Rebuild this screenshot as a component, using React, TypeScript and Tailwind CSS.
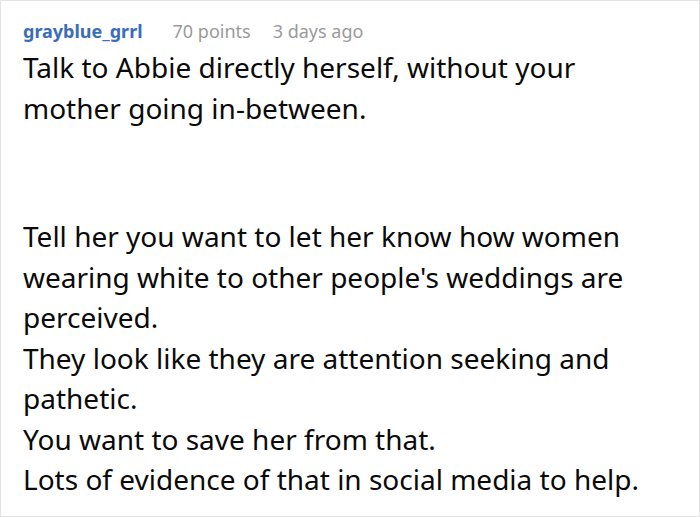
import React from "react";

export default function App() {
  return (
    <div
      className="w-[700px] h-[517px] bg-white border border-[#e3e3e3] overflow-hidden pl-[22px] pr-4"
      style={{ fontFamily: '"Noto Sans", "Open Sans", sans-serif' }}
    >
      <div className="flex items-center h-[30px] mt-[15px] text-[18px] leading-[30px] whitespace-nowrap">
        <span className="font-bold text-[#3a6cbc]">grayblue_grrl</span>
        <span className="ml-[30px] text-[#9a9a9a]">70 points</span>
        <span className="ml-[22px] text-[#9a9a9a]">3 days ago</span>
      </div>
      <div className="text-[28px] leading-[40.5px] text-[#0a0a0a] mt-[1px] whitespace-nowrap">
        <p>
          Talk to Abbie directly herself, without your
          <br />
          mother going in-between.
        </p>
        <div className="h-[88px]" />
        <p>
          Tell her you want to let her know how women
          <br />
          wearing white to other people's weddings are
          <br />
          perceived.
          <br />
          They look like they are attention seeking and
          <br />
          pathetic.
          <br />
          You want to save her from that.
          <br />
          Lots of evidence of that in social media to help.
        </p>
      </div>
    </div>
  );
}
